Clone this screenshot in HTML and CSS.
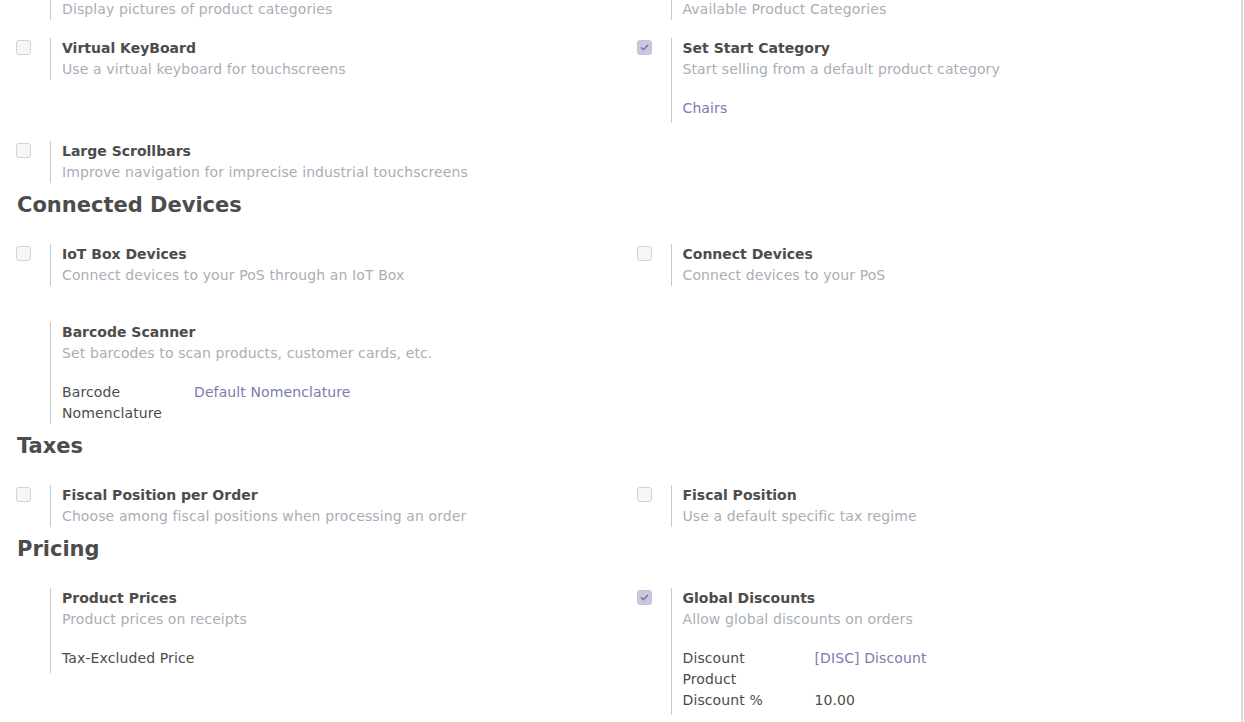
FILE: index.html
```html
<!DOCTYPE html>
<html>
<head>
<meta charset="utf-8">
<link rel="stylesheet" href="styles.css">
</head>
<body>
<div class="page">
  <div class="grid">
    <div class="box">
      <div class="pane"><span class="cb"></span></div>
      <div class="body">
        <div class="title">Category Pictures</div>
        <div class="desc">Display pictures of product categories</div>
      </div>
    </div>
    <div class="box">
      <div class="pane"><span class="cb"></span></div>
      <div class="body">
        <div class="title">Restrict Product Categories</div>
        <div class="desc">Available Product Categories</div>
      </div>
    </div>
    <div class="box">
      <div class="pane"><span class="cb"></span></div>
      <div class="body">
        <div class="title">Virtual KeyBoard</div>
        <div class="desc">Use a virtual keyboard for touchscreens</div>
      </div>
    </div>
    <div class="box">
      <div class="pane"><span class="cb checked"><svg viewBox="0 0 15 15" width="15" height="15"><path d="M4.4 7.8 L6.5 9.7 L10.6 5.4" fill="none" stroke="#7d7bb0" stroke-width="1.6" stroke-linecap="round" stroke-linejoin="round"/></svg></span></div>
      <div class="body">
        <div class="title">Set Start Category</div>
        <div class="desc">Start selling from a default product category</div>
        <div class="fields pad">
          <div class="link">Chairs</div>
        </div>
      </div>
    </div>
    <div class="box">
      <div class="pane"><span class="cb"></span></div>
      <div class="body">
        <div class="title">Large Scrollbars</div>
        <div class="desc">Improve navigation for imprecise industrial touchscreens</div>
      </div>
    </div>
  </div>

  <h2 class="heading">Connected Devices</h2>
  <div class="grid">
    <div class="box">
      <div class="pane"><span class="cb"></span></div>
      <div class="body">
        <div class="title">IoT Box Devices</div>
        <div class="desc">Connect devices to your PoS through an IoT Box</div>
      </div>
    </div>
    <div class="box">
      <div class="pane"><span class="cb"></span></div>
      <div class="body">
        <div class="title">Connect Devices</div>
        <div class="desc">Connect devices to your PoS</div>
      </div>
    </div>
    <div class="box box-spaced">
      <div class="pane"></div>
      <div class="body">
        <div class="title">Barcode Scanner</div>
        <div class="desc">Set barcodes to scan products, customer cards, etc.</div>
        <div class="fields">
          <div class="field-row">
            <div class="label">Barcode Nomenclature</div>
            <div class="link">Default Nomenclature</div>
          </div>
        </div>
      </div>
    </div>
  </div>

  <h2 class="heading">Taxes</h2>
  <div class="grid">
    <div class="box">
      <div class="pane"><span class="cb"></span></div>
      <div class="body">
        <div class="title">Fiscal Position per Order</div>
        <div class="desc">Choose among fiscal positions when processing an order</div>
      </div>
    </div>
    <div class="box">
      <div class="pane"><span class="cb"></span></div>
      <div class="body">
        <div class="title">Fiscal Position</div>
        <div class="desc">Use a default specific tax regime</div>
      </div>
    </div>
  </div>

  <h2 class="heading">Pricing</h2>
  <div class="grid">
    <div class="box">
      <div class="pane"></div>
      <div class="body">
        <div class="title">Product Prices</div>
        <div class="desc">Product prices on receipts</div>
        <div class="fields pad">
          <div class="value">Tax-Excluded Price</div>
        </div>
      </div>
    </div>
    <div class="box">
      <div class="pane"><span class="cb checked"><svg viewBox="0 0 15 15" width="15" height="15"><path d="M4.4 7.8 L6.5 9.7 L10.6 5.4" fill="none" stroke="#7d7bb0" stroke-width="1.6" stroke-linecap="round" stroke-linejoin="round"/></svg></span></div>
      <div class="body">
        <div class="title">Global Discounts</div>
        <div class="desc">Allow global discounts on orders</div>
        <div class="fields pad">
          <div class="field-row">
            <div class="label">Discount Product</div>
            <div class="link">[DISC] Discount</div>
          </div>
          <div class="field-row">
            <div class="label">Discount %</div>
            <div class="value">10.00</div>
          </div>
        </div>
      </div>
    </div>
  </div>
</div>
</body>
</html>
```

FILE: styles.css
```css
html, body {
  margin: 0;
  padding: 0;
  background: #ffffff;
}

body {
  font-family: "DejaVu Sans", Verdana, sans-serif;
  font-size: 14px;
  line-height: 21px;
  color: #4c4c4c;
  overflow: hidden;
}

.page {
  width: 1241px;
  margin-top: -22px;
  border-right: 2px solid #dddce4;
  min-height: 760px;
}

.grid {
  display: grid;
  grid-template-columns: 1fr 1fr;
  row-gap: 18px;
  align-items: start;
}

.box {
  display: flex;
  align-items: stretch;
}

.box-spaced {
  margin-top: 18px;
}

.pane {
  width: 50px;
  flex: none;
  padding-top: 2px;
  box-sizing: border-box;
}

.body {
  border-left: 1px solid #c9c9c9;
  padding-left: 11px;
  flex: 1;
}

.cb {
  display: block;
  width: 13px;
  height: 13px;
  margin-left: 16px;
  border: 1px solid #d3d3d3;
  border-radius: 3px;
  background: #f6f6f6;
}

.cb.checked {
  background: #c9c8de;
  border-color: #c2c1d8;
}

.cb svg {
  display: block;
  margin: -1px 0 0 -1px;
}

.title {
  font-weight: bold;
  color: #4c4c4c;
}

.desc {
  color: #a9aeb6;
  letter-spacing: 0.11px;
}

.fields {
  margin-top: 18px;
}

.fields.pad {
  padding-bottom: 4px;
}

.field-row {
  display: grid;
  grid-template-columns: 132px 1fr;
}

.label {
  padding-right: 24px;
  color: #4c4c4c;
  letter-spacing: 0.11px;
}

.link {
  color: #7c7bad;
  letter-spacing: 0.11px;
}

.value {
  color: #4c4c4c;
  letter-spacing: 0.11px;
}

.heading {
  margin: 10px 0 27px 0;
  padding-left: 17px;
  font-size: 21px;
  line-height: 24px;
  font-weight: bold;
  color: #4c4c4c;
}
```
